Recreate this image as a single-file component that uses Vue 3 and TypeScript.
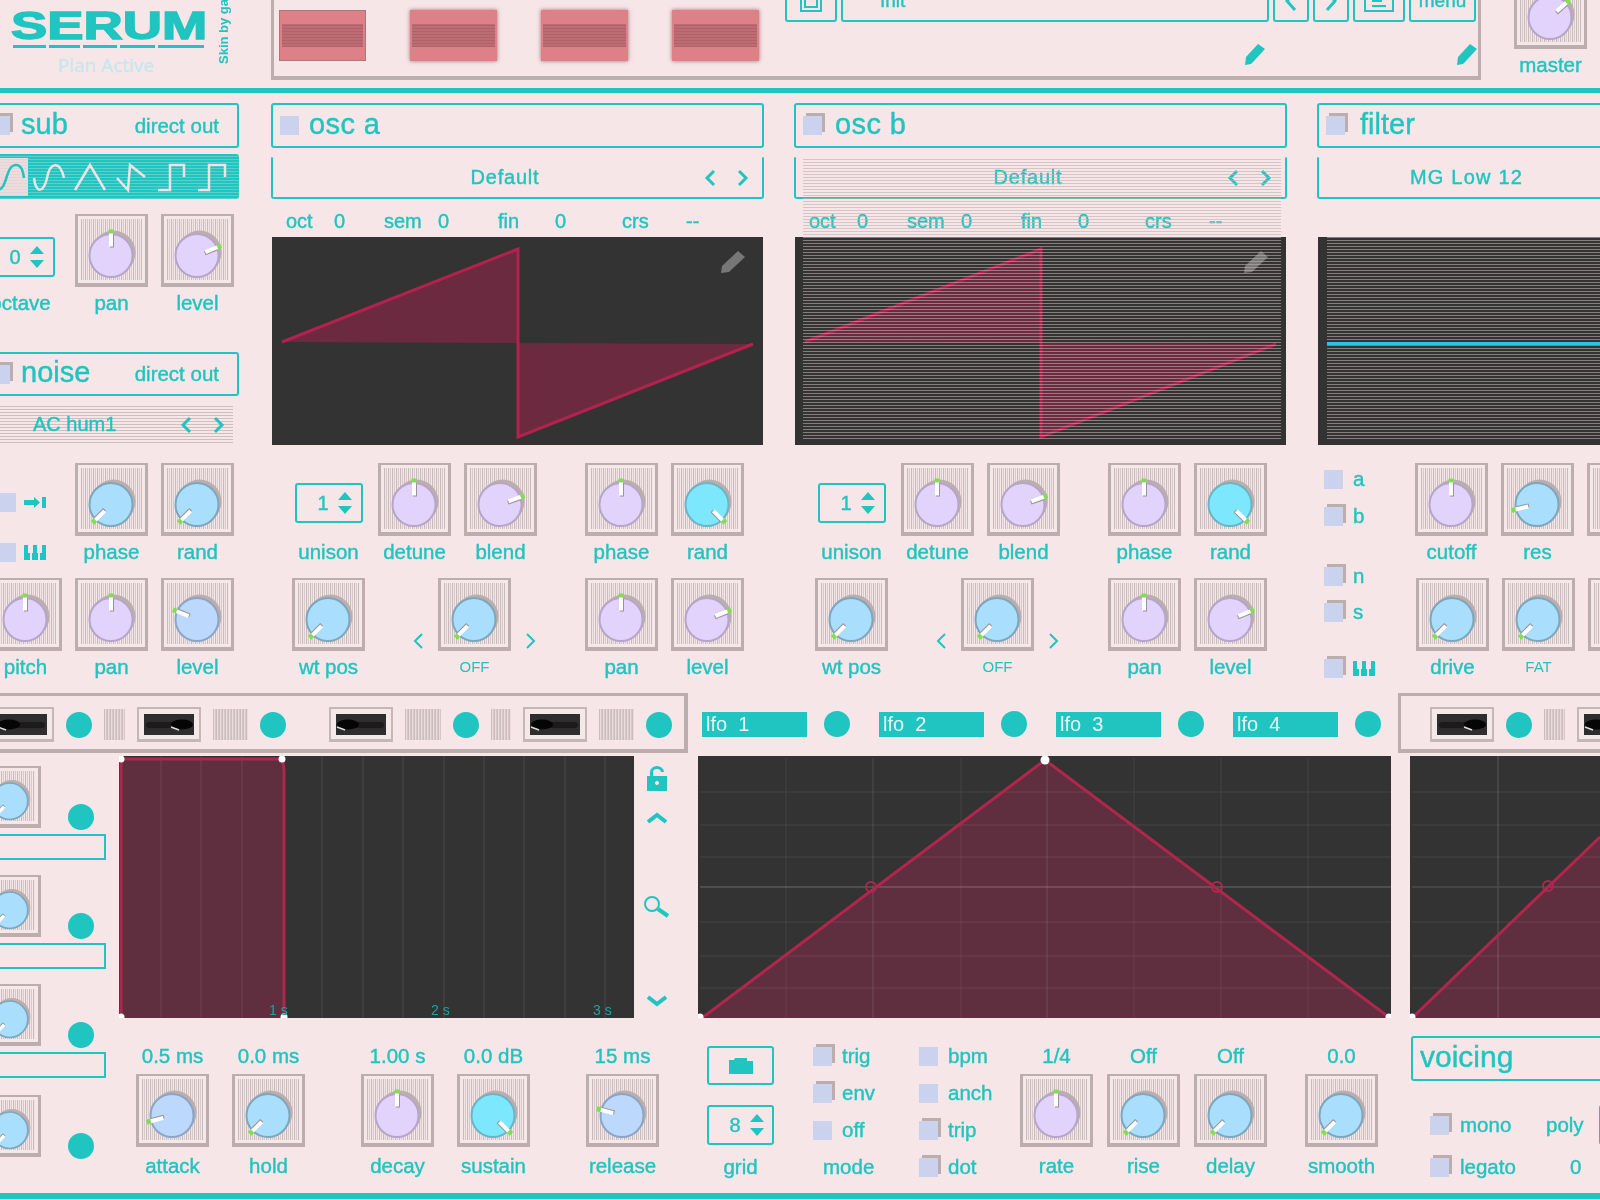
<template>
  <div class="app">
    <header class="top">
      <div class="logo">
        <div class="logo-main">
          <div class="wordmark">SERUM</div>
          <div class="underline">
            <i v-for="w in logoBars" :key="w" :style="{ width: w + 'px' }"></i>
          </div>
          <div class="plan">Plan Active</div>
        </div>
        <div class="skin">Skin by gati</div>
      </div>
      <div class="macro-panel">
        <div class="macros">
          <div v-for="(m, i) in 4" :key="m" class="macro" :class="{ flat: i === 0 }"><i></i></div>
        </div>
        <div class="preset">
          <div class="preset-row">
            <button class="pbtn w-save">
              <svg width="24" height="22" viewBox="0 0 24 22"><path d="M2 1h20v20H2zM6 5h12v12H6z" fill="none" stroke="#20c4c0" stroke-width="2" /></svg>
            </button>
            <button class="pbtn w-init">Init</button>
            <button class="pbtn w-arrow">
              <svg width="14" height="22" viewBox="0 0 14 22"><path d="M11 2 3 11l8 9" fill="none" stroke="#20c4c0" stroke-width="3" /></svg>
            </button>
            <button class="pbtn w-arrow">
              <svg width="14" height="22" viewBox="0 0 14 22"><path d="m3 2 8 9-8 9" fill="none" stroke="#20c4c0" stroke-width="3" /></svg>
            </button>
            <button class="pbtn w-save">
              <svg width="30" height="22" viewBox="0 0 30 22"><path d="M1 1h28v20H1z" fill="none" stroke="#20c4c0" stroke-width="2" /><path d="M8 6h14M8 11h10M8 16h14" stroke="#20c4c0" stroke-width="2" /></svg>
            </button>
            <button class="pbtn w-menu">menu</button>
          </div>
          <div class="pencils">
            <svg v-for="p in 2" :key="p" width="22" height="23" viewBox="0 0 22 23"><path d="M1 22 2 14 14 1l7 5L9 19l-2 2z" fill="#20c4c0" /></svg>
          </div>
        </div>
      </div>
      <Knob class="master" label="master" tone="violet" :angle="48" />
    </header>
    <div class="rule"></div>

    <section class="synth">
      <div class="col-left">
        <div class="box head left-head">
          <i class="chk raised"></i>
          <span class="title">sub</span>
          <span class="direct">direct out</span>
        </div>
        <div class="waves">
          <i class="wave-on"></i>
          <svg class="wave-svg" width="239" height="45" viewBox="0 0 239 45">
            <path d="M-3 36C8 36 5 11 16 11c6 0 7 7 8 13" fill="none" stroke="#20c4c0" stroke-width="2.500" />
            <g fill="none" stroke="#f0e3e3" stroke-width="2.500">
              <path d="M34 24c2 17 10 14 13 0 3-16 13-18 17 0" />
              <path d="m75 36 15-25 15 25" />
              <path d="m117 24 11 12 2-25 15 12" />
              <path d="M158 36h12V11h14v12" />
              <path d="M198 36h11V11h16v12" />
            </g>
          </svg>
        </div>
        <div class="row sub-row">
          <Stepper class="low" label="octave" value="0" />
          <Knob v-bind="subKnobs[0]" />
          <Knob v-bind="subKnobs[1]" />
        </div>
        <div class="box head left-head noise-head">
          <i class="chk raised"></i>
          <span class="title">noise</span>
          <span class="direct">direct out</span>
        </div>
        <div class="noise-band">
          <span>AC hum1</span>
          <svg class="chev" width="12" height="18" viewBox="0 0 12 18"><path d="M10 2 3 9l7 7" /></svg>
          <svg class="chev" width="12" height="18" viewBox="0 0 12 18"><path d="m2 2 7 7-7 7" /></svg>
        </div>
        <div class="row left-r1">
          <div class="lead">
            <div class="lead-item">
              <i class="chk"></i>
              <svg width="22" height="11" viewBox="0 0 22 11"><path d="M0 3h10V0l6 5.500-6 5.500V8H0zM18 0h4v11h-4z" fill="#20c4c0" /></svg>
            </div>
            <div class="lead-item">
              <i class="chk"></i>
              <svg width="22" height="15" viewBox="0 0 22 15"><path d="M0 0h4v8h2v7H0zM8 8h1V0h4v8h1v7H8zM16 8h2V0h4v15h-6z" fill="#20c4c0" /></svg>
            </div>
          </div>
          <Knob v-for="k in noiseKnobs" :key="k.label" v-bind="k" />
        </div>
        <div class="row left-r2">
          <Knob v-for="k in mixKnobs" :key="k.label" v-bind="k" />
        </div>
      </div>

      <div v-for="(o, i) in oscs" :key="o.name" class="osc" :class="{ 'osc-b': i === 1 }">
        <div class="box head">
          <i class="chk" :class="{ raised: i === 1 }"></i>
          <span class="title">{{ o.name }}</span>
        </div>
        <div class="box open select">
          <span class="select-name">Default</span>
          <svg class="chev" width="12" height="18" viewBox="0 0 12 18"><path d="M10 2 3 9l7 7" /></svg>
          <svg class="chev" width="12" height="18" viewBox="0 0 12 18"><path d="m2 2 7 7-7 7" /></svg>
        </div>
        <div class="params">
          <span v-for="(p, j) in params" :key="j">{{ p }}</span>
        </div>
        <div class="graph">
          <svg width="491" height="208" viewBox="0 0 491 208">
            <path d="M10 105 246 12v94zM246 106v94l235-93z" fill="#6b2a3f" />
            <path d="M10 105 246 12v188l235-93" fill="none" stroke="#b3224f" stroke-width="3" />
          </svg>
          <svg class="graph-pencil" width="26" height="24" viewBox="0 0 26 24"><path d="M1 23 2 16 18 1l7 6L9 22z" fill="#777" /></svg>
        </div>
        <div class="osc-knobs">
          <Stepper label="unison" value="1" />
          <Knob v-bind="o.row1[0]" />
          <Knob v-bind="o.row1[1]" />
          <Knob class="far" v-bind="o.row1[2]" />
          <Knob v-bind="o.row1[3]" />
        </div>
        <div class="osc-knobs second">
          <Knob v-bind="o.row2[0]" />
          <div class="chev-slot">
            <svg class="chev thin" width="12" height="18" viewBox="0 0 12 18"><path d="M10 2 3 9l7 7" /></svg>
          </div>
          <Knob class="small-label" v-bind="o.row2[1]" />
          <div class="chev-slot right">
            <svg class="chev thin" width="12" height="18" viewBox="0 0 12 18"><path d="m2 2 7 7-7 7" /></svg>
          </div>
          <Knob v-bind="o.row2[2]" />
          <Knob v-bind="o.row2[3]" />
        </div>
        <div v-if="i === 1" class="lines osc-lines"></div>
      </div>

      <div class="filter">
        <div class="box head">
          <i class="chk raised"></i>
          <span class="title">filter</span>
        </div>
        <div class="box open select filter-select">MG Low 12</div>
        <div class="graph filter-graph">
          <i class="lines filter-lines"></i>
          <i class="filter-line"></i>
        </div>
        <div class="filter-rows">
          <div class="route">
            <div class="route-group">
              <div class="opt"><i class="chk"></i><span>a</span></div>
              <div class="opt"><i class="chk raised"></i><span>b</span></div>
            </div>
            <div class="route-group tight">
              <div class="opt"><i class="chk raised"></i><span>n</span></div>
              <div class="opt"><i class="chk raised"></i><span>s</span></div>
            </div>
            <div class="route-group">
              <div class="opt">
                <i class="chk raised"></i>
                <svg width="22" height="15" viewBox="0 0 22 15"><path d="M0 0h4v8h2v7H0zM8 8h1V0h4v8h1v7H8zM16 8h2V0h4v15h-6z" fill="#20c4c0" /></svg>
              </div>
            </div>
          </div>
          <div class="filter-knobs">
            <div class="row">
              <Knob v-for="k in filterRow1" :key="k.label" v-bind="k" />
            </div>
            <div class="row filter-second">
              <Knob v-for="(k, i) in filterRow2" :key="i" :class="{ 'small-label': k.label === 'FAT' }" v-bind="k" />
            </div>
          </div>
        </div>
      </div>
    </section>

    <section class="strip-row">
      <div class="strip">
        <template v-for="(it, i) in stripLeft" :key="i">
          <div v-if="it.kind === 'slot'" class="slot" :class="{ 'after-gap': it.brk }">
            <svg width="50" height="21" viewBox="0 0 50 21">
              <rect x="2" y="8" width="46" height="6" rx="3" fill="#1b1b1b" />
              <ellipse :cx="it.blob === 'r' ? 38 : 12" cy="10.500" rx="11" ry="5" fill="#050505" />
              <path :d="it.blob === 'r' ? 'M27 13l8 3' : 'M1 13l8 3'" stroke="#ddd" stroke-width="1.500" />
            </svg>
          </div>
          <i v-else-if="it.kind === 'dot'" class="dot"></i>
          <i v-else class="hatch" :style="{ width: it.w + 'px' }"></i>
        </template>
      </div>
      <div class="lfo-tabs">
        <div v-for="n in 4" :key="n" class="lfo-tab">
          <span class="tab">lfo&nbsp; {{ n }}</span>
          <i class="dot"></i>
        </div>
      </div>
      <div class="strip strip-right">
        <div class="slot">
          <svg width="50" height="21" viewBox="0 0 50 21">
            <rect x="2" y="8" width="46" height="6" rx="3" fill="#1b1b1b" />
            <ellipse cx="38" cy="10.500" rx="11" ry="5" fill="#050505" />
            <path d="M27 13l8 3" stroke="#ddd" stroke-width="1.500" />
          </svg>
        </div>
        <i class="dot"></i>
        <i class="hatch narrow"></i>
        <div class="slot">
          <svg width="50" height="21" viewBox="0 0 50 21">
            <rect x="2" y="8" width="46" height="6" rx="3" fill="#1b1b1b" />
            <ellipse cx="12" cy="10.500" rx="11" ry="5" fill="#050505" />
            <path d="M1 13l8 3" stroke="#ddd" stroke-width="1.500" />
          </svg>
        </div>
      </div>
    </section>

    <section class="lower">
      <div class="mods">
        <div v-for="n in 4" :key="n" class="mod">
          <div class="mod-top">
            <Knob :small="true" tone="sky" :angle="-135" />
            <i class="dot"></i>
          </div>
          <div v-if="n < 4" class="mod-box"></div>
        </div>
      </div>

      <div class="lower-main">
        <div class="graphs">
          <svg class="env" width="515" height="262" viewBox="0 0 515 262">
            <rect width="515" height="262" fill="#333" />
            <path d="M2 3h160c2 2 3 6 3 12v247H2z" fill="#5f2f3f" />
            <path v-for="x in envLines" :key="x" :d="`M${x} 0v262`" stroke="#fff" stroke-opacity=".1" stroke-width="1" />
            <path d="M2 262V3h160c2 2 3 6 3 12v247" fill="none" stroke="#ab2851" stroke-width="3" />
            <circle cx="2" cy="3" r="3.500" fill="#fff" />
            <circle cx="163" cy="3" r="3.500" fill="#fff" />
            <circle cx="2" cy="261" r="3.500" fill="#fff" />
            <circle cx="165" cy="261" r="3.500" fill="#fff" />
            <text x="150" y="259" class="sec">1 s</text>
            <text x="312" y="259" class="sec">2 s</text>
            <text x="474" y="259" class="sec">3 s</text>
          </svg>
          <div class="tools">
            <svg width="20" height="25" viewBox="0 0 20 25"><path d="M0 10h20v15H0zM10 15a2 2 0 1 0 .01 0z" fill="#20c4c0" fill-rule="evenodd" /><path d="M4.500 10V6a5.500 4.500 0 0 1 11 0" fill="none" stroke="#20c4c0" stroke-width="3" /></svg>
            <svg class="t-up" width="20" height="12" viewBox="0 0 20 12"><path d="M1 10 10 3l9 7" fill="none" stroke="#20c4c0" stroke-width="4" /></svg>
            <svg class="t-mag" width="26" height="22" viewBox="0 0 26 22"><circle cx="8" cy="8" r="7" fill="none" stroke="#20c4c0" stroke-width="2" /><path d="m14 13 10 7" stroke="#20c4c0" stroke-width="4" /></svg>
            <svg class="t-down" width="20" height="12" viewBox="0 0 20 12"><path d="m1 2 9 7 9-7" fill="none" stroke="#20c4c0" stroke-width="4" /></svg>
          </div>
          <svg class="lfo" width="693" height="262" viewBox="0 0 693 262">
            <rect width="693" height="262" fill="#333" />
            <path d="M4 262 347 4l345 258z" fill="#5f2f3f" />
            <path v-for="x in lfoV" :key="'v' + x" :d="`M${x} 2v260`" stroke="#fff" stroke-opacity=".07" />
            <path v-for="y in lfoH" :key="'h' + y" :d="`M2 ${y}h691`" stroke="#fff" stroke-opacity=".06" stroke-width="1.500" />
            <path d="M2 131h691" stroke="#fff" stroke-opacity=".18" stroke-width="1.500" />
            <path d="M175 2v260M349 2v260" stroke="#fff" stroke-opacity=".13" />
            <path d="M4 262 347 4l345 258" fill="none" stroke="#b0264f" stroke-width="3" />
            <circle cx="173" cy="131" r="5" fill="none" stroke="#b0264f" stroke-width="2" />
            <circle cx="519" cy="131" r="5" fill="none" stroke="#b0264f" stroke-width="2" />
            <circle cx="347" cy="4" r="4.500" fill="#fff" />
            <circle cx="2" cy="261" r="3.500" fill="#fff" />
            <circle cx="691" cy="261" r="3.500" fill="#fff" />
          </svg>
          <svg class="lfo-right" width="190" height="262" viewBox="0 0 190 262">
            <rect width="190" height="262" fill="#333" />
            <path d="M2 262 190 81v181z" fill="#5f2f3f" />
            <path v-for="y in lfoH" :key="y" :d="`M2 ${y}h188`" stroke="#fff" stroke-opacity=".06" stroke-width="1.500" />
            <path d="M2 131h188M88 0v262" stroke="#fff" stroke-opacity=".12" stroke-width="1.500" />
            <path d="M2 262 190 81" fill="none" stroke="#b0264f" stroke-width="3" />
            <circle cx="138" cy="130" r="5" fill="none" stroke="#b0264f" stroke-width="2" />
            <circle cx="2" cy="261" r="3.500" fill="#fff" />
          </svg>
        </div>

        <div class="controls">
          <div class="knob-group first">
            <div class="pair"><Knob v-for="k in envKnobs.slice(0, 2)" :key="k.label" v-bind="k" /></div>
            <div class="pair"><Knob v-for="k in envKnobs.slice(2, 4)" :key="k.label" v-bind="k" /></div>
            <Knob v-bind="envKnobs[4]" />
          </div>
          <div class="grid-col">
            <button class="box folder">
              <svg width="26" height="17" viewBox="0 0 26 17"><path d="M1 3h5l1-2h12v3h6v13H1z" fill="#20c4c0" /></svg>
            </button>
            <Stepper label="grid" value="8" class="grid-step" />
          </div>
          <div class="opt-col">
            <div class="opt"><i class="chk raised"></i><span>trig</span></div>
            <div class="opt"><i class="chk raised"></i><span>env</span></div>
            <div class="opt"><i class="chk"></i><span>off</span></div>
            <div class="mode">mode</div>
          </div>
          <div class="opt-col col-bpm">
            <div class="opt"><i class="chk"></i><span>bpm</span></div>
            <div class="opt"><i class="chk"></i><span>anch</span></div>
            <div class="opt"><i class="chk raised"></i><span>trip</span></div>
            <div class="opt"><i class="chk raised"></i><span>dot</span></div>
          </div>
          <div class="pair lfo-knobs">
            <Knob v-for="k in lfoKnobs.slice(0, 3)" :key="k.label" v-bind="k" />
          </div>
          <Knob class="smooth" v-bind="lfoKnobs[3]" />
          <div class="voicing">
            <div class="box head voice-head"><span class="title">voicing</span></div>
            <div class="voice-row">
              <i class="chk raised"></i>
              <span class="voice-name">mono</span>
              <span class="poly">poly</span>
              <div class="box poly-box"></div>
            </div>
            <div class="voice-row">
              <i class="chk raised"></i>
              <span class="voice-name">legato</span>
              <span class="zero">0</span>
            </div>
          </div>
        </div>
      </div>
    </section>
    <div class="rule bottom-rule"></div>
  </div>
</template>

<script setup lang="ts">
import { h, type FunctionalComponent } from "vue";

type Tone = "violet" | "sky" | "blue" | "cyan";

interface KnobProps {
  label?: string;
  value?: string;
  tone?: Tone;
  angle?: number;
  small?: boolean;
}

const toneColors: Record<Tone, [string, string]> = {
  violet: ["#e2d3fc", "#b7a5c9"],
  sky: ["#a9defd", "#7ea6bd"],
  blue: ["#bcd9fd", "#8aa5c5"],
  cyan: ["#7de8fd", "#6db3c6"],
};

const Knob: FunctionalComponent<KnobProps> = (p) => {
  const [fill, edge] = toneColors[p.tone ?? "sky"];
  const cx = 36;
  const cy = 41.5;
  const svg = h("svg", { class: "knob", viewBox: "0 0 73 73" }, [
    h("circle", { cx: cx + 2.5, cy: cy - 3, r: 22, fill: "#bdaeae" }),
    h("circle", { cx, cy, r: 21.5, fill, stroke: edge, "stroke-width": 2 }),
    h("g", { transform: `rotate(${p.angle ?? 0} ${cx} ${cy})` }, [
      h("rect", { x: cx - 2.5, y: cy - 26, width: 5, height: 4, fill: "#7ee04c" }),
      h("rect", { x: cx - 1, y: cy - 21, width: 4, height: 13, fill: "#9a9296" }),
      h("rect", { x: cx - 2, y: cy - 22, width: 4, height: 13, fill: "#fff" }),
    ]),
  ]);
  return h("div", { class: "cell" }, [
    p.value ? h("span", { class: "val" }, p.value) : null,
    h("div", { class: ["tile", p.small ? "sm" : ""] }, svg),
    p.label !== undefined ? h("span", { class: "lbl" }, p.label) : null,
  ]);
};
Knob.props = ["label", "value", "tone", "angle", "small"];

const Stepper: FunctionalComponent<{ label: string; value: string }> = (p) =>
  h("div", { class: "cell" }, [
    h("div", { class: "step-area" }, [
      h("div", { class: "step" }, [
        h("span", { class: "step-num" }, p.value),
        h("svg", { width: 14, height: 26, viewBox: "0 0 14 26" }, [
          h("path", { d: "M7 2l7 8H0zM0 16h14l-7 8z", fill: "#20c4c0" }),
        ]),
      ]),
    ]),
    h("span", { class: "lbl" }, p.label),
  ]);
Stepper.props = ["label", "value"];

const logoBars = [33, 31, 34, 35, 46];

const params = ["oct", "0", "sem", "0", "fin", "0", "crs", "--"];

const subKnobs: KnobProps[] = [
  { label: "pan", tone: "violet", angle: 0 },
  { label: "level", tone: "violet", angle: 68 },
];

const noiseKnobs: KnobProps[] = [
  { label: "phase", tone: "sky", angle: -135 },
  { label: "rand", tone: "sky", angle: -135 },
];

const mixKnobs: KnobProps[] = [
  { label: "pitch", tone: "violet", angle: 0 },
  { label: "pan", tone: "violet", angle: 0 },
  { label: "level", tone: "blue", angle: -68 },
];

const oscRow1: KnobProps[] = [
  { label: "detune", tone: "violet", angle: 0 },
  { label: "blend", tone: "violet", angle: 70 },
  { label: "phase", tone: "violet", angle: 0 },
  { label: "rand", tone: "cyan", angle: 135 },
];

const oscRow2: KnobProps[] = [
  { label: "wt pos", tone: "sky", angle: -135 },
  { label: "OFF", tone: "sky", angle: -135 },
  { label: "pan", tone: "violet", angle: 0 },
  { label: "level", tone: "violet", angle: 68 },
];

const oscs = [
  { name: "osc a", row1: oscRow1, row2: oscRow2 },
  { name: "osc b", row1: oscRow1, row2: oscRow2 },
];

const filterRow1: KnobProps[] = [
  { label: "cutoff", tone: "violet", angle: 0 },
  { label: "res", tone: "sky", angle: -103 },
  { label: "", tone: "sky", angle: -135 },
];

const filterRow2: KnobProps[] = [
  { label: "drive", tone: "sky", angle: -135 },
  { label: "FAT", tone: "sky", angle: -135 },
  { label: "", tone: "sky", angle: -135 },
];

const envKnobs: KnobProps[] = [
  { value: "0.5 ms", label: "attack", tone: "blue", angle: -105 },
  { value: "0.0 ms", label: "hold", tone: "sky", angle: -135 },
  { value: "1.00 s", label: "decay", tone: "violet", angle: 0 },
  { value: "0.0 dB", label: "sustain", tone: "cyan", angle: 135 },
  { value: "15 ms", label: "release", tone: "blue", angle: -75 },
];

const lfoKnobs: KnobProps[] = [
  { value: "1/4", label: "rate", tone: "violet", angle: 0 },
  { value: "Off", label: "rise", tone: "sky", angle: -135 },
  { value: "Off", label: "delay", tone: "sky", angle: -135 },
  { value: "0.0", label: "smooth", tone: "sky", angle: -135 },
];

type StripItem =
  | { kind: "slot"; blob: "l" | "r"; brk?: boolean }
  | { kind: "dot" }
  | { kind: "hatch"; w: number };

const stripLeft: StripItem[] = [
  { kind: "slot", blob: "l" },
  { kind: "dot" },
  { kind: "hatch", w: 21 },
  { kind: "slot", blob: "r" },
  { kind: "hatch", w: 35 },
  { kind: "dot" },
  { kind: "slot", blob: "l", brk: true },
  { kind: "hatch", w: 36 },
  { kind: "dot" },
  { kind: "hatch", w: 20 },
  { kind: "slot", blob: "l" },
  { kind: "hatch", w: 35 },
  { kind: "dot" },
];

const envLines = [42, 82, 123, 203, 244, 284, 325, 365, 405, 446, 486];
const lfoV = [88, 263, 436, 523, 610];
const lfoH = [36, 69, 101, 166, 200, 232];
</script>

<style>
.cell {
  display: flex;
  flex-direction: column;
  align-items: center;
  width: 73px;
  flex: none;
}
.tile {
  position: relative;
  box-sizing: border-box;
  width: 73px;
  height: 73px;
  flex: none;
  border: 3px solid #bdaeae;
  border-top-width: 2px;
  border-bottom-width: 4px;
  padding: 3px;
  background: repeating-linear-gradient(90deg, #c9bbbb 0 1px, #f1e3e3 1px 2px, #d8caca 2px 3px, #f5e8e8 3px 4px) content-box, #f5e8e8;
}
.tile.sm {
  width: 62px;
  height: 62px;
}
.knob {
  position: absolute;
  left: -3px;
  top: -2px;
  width: 73px;
  height: 73px;
  overflow: visible;
}
.tile.sm .knob {
  width: 62px;
  height: 62px;
}
.lbl,
.val {
  font-size: 20.5px;
  line-height: 24px;
  height: 24px;
  white-space: nowrap;
  color: #20c4c0;
}
.lbl {
  margin-top: 4px;
}
.val {
  margin-bottom: 6px;
}
.step-area {
  height: 73px;
  box-sizing: border-box;
  padding-top: 20px;
}
.cell.low .step-area {
  padding-top: 23px;
}
.step {
  display: flex;
  align-items: center;
  justify-content: center;
  gap: 9px;
  box-sizing: border-box;
  width: 68px;
  height: 40px;
  padding-left: 12px;
  border: 2px solid #20c4c0;
  border-radius: 3px;
}
.step-num {
  width: 12px;
  text-align: center;
  font-size: 20px;
  color: #20c4c0;
}
.small-label .lbl {
  font-size: 15px;
  -webkit-text-stroke-width: 0;
}
</style>

<style scoped>
.app {
  position: relative;
  width: 1600px;
  height: 1200px;
  overflow: hidden;
  background: #f6e6e7;
  color: #20c4c0;
  font-family: "Liberation Sans", Arial, sans-serif;
  -webkit-text-stroke-width: 0.4px;
  filter: blur(0.3px);
}

i {
  display: block;
  font-style: normal;
}

button {
  font-family: inherit;
  background: none;
  color: inherit;
  padding: 0;
}

.top {
  display: flex;
  height: 88px;
}

.logo {
  display: flex;
  width: 271px;
  flex: none;
}

.logo-main {
  width: 218px;
  padding-top: 7px;
  padding-left: 11px;
  box-sizing: border-box;
}

.wordmark {
  font-size: 38px;
  line-height: 38px;
  font-weight: 700;
  transform: scaleX(1.43);
  transform-origin: left;
  -webkit-text-stroke-width: 1.4px;
}

.underline {
  display: flex;
  gap: 3px;
  margin-left: 2px;
}

.underline i {
  height: 3px;
  background: #20c4c0;
}

.plan {
  margin-top: 6px;
  padding-left: 47px;
  font-family: "Open Sans", sans-serif;
  font-size: 19px;
  line-height: 22px;
  color: #c8e6ee;
}

.skin {
  align-self: flex-start;
  height: 64px;
  writing-mode: vertical-rl;
  transform: rotate(180deg);
  white-space: nowrap;
  font-size: 13px;
  font-weight: 700;
  line-height: 12px;
  -webkit-text-stroke-width: 0;
}

.macro-panel {
  display: flex;
  box-sizing: border-box;
  width: 1210px;
  height: 80px;
  flex: none;
  border: 3px solid #bdaeae;
  border-top: 0;
  border-bottom-width: 4px;
  padding-left: 5px;
}

.macros {
  display: flex;
  gap: 44px;
  width: 506px;
  flex: none;
  padding-top: 10px;
}

.macro {
  display: flex;
  align-items: center;
  width: 87px;
  height: 51px;
  box-sizing: border-box;
  background: #de8088;
  box-shadow: 0 0 4px #a06a6e;
}

.macro.flat {
  border: 1px solid #a77;
  box-shadow: none;
}

.macro i {
  flex: 1;
  height: 23px;
  margin: 0 2px;
  background: repeating-linear-gradient(0deg, #ae6269 0 1px, #be6c74 1px 3px);
}

.preset {
  display: flex;
  flex-direction: column;
  width: 694px;
  flex: none;
}

.preset-row {
  display: flex;
  gap: 4px;
  height: 22px;
  align-items: flex-end;
}

.pbtn {
  display: flex;
  align-items: center;
  justify-content: center;
  box-sizing: border-box;
  height: 42px;
  flex: none;
  border: 2px solid #20c4c0;
  border-radius: 3px;
  font-size: 19px;
}

.w-save {
  width: 52px;
}

.w-init {
  width: 428px;
  justify-content: flex-start;
  padding-left: 37px;
}

.w-arrow {
  width: 36px;
}

.w-menu {
  width: 67px;
}

.pencils {
  display: flex;
  gap: 190px;
  margin-top: 21px;
  padding-left: 459px;
}

.master {
  margin-top: -24px;
  margin-left: 33px;
}

.rule {
  height: 5px;
  background: #20c4c0;
}

.synth {
  display: flex;
  height: 600px;
}

.box {
  box-sizing: border-box;
  border: 2px solid #20c4c0;
  border-radius: 3px;
}

.head {
  display: flex;
  align-items: center;
  height: 45px;
  margin-top: 10px;
}

.title {
  font-size: 29px;
  line-height: 40px;
  margin-top: -4px;
}

.chk {
  display: block;
  position: relative;
  width: 19px;
  height: 19px;
  flex: none;
  background: #cad2ee;
}

.chk.raised {
  box-shadow: 3px -3px 0 #bdaeae;
}

.col-left {
  width: 239px;
  flex: none;
  margin-right: 32px;
}

.left-head {
  width: 259px;
  margin-left: -20px;
  padding-left: 9px;
}

.left-head .title {
  margin-left: 11px;
}

.direct {
  margin-left: auto;
  padding-right: 18px;
  font-size: 20.5px;
}

.waves {
  position: relative;
  height: 45px;
  margin-top: 6px;
  background: repeating-linear-gradient(0deg, #5dd0cb 0 1px, #20c4c0 1px 3px);
  border-radius: 0 3px 3px 0;
}

.wave-on {
  position: absolute;
  left: 0;
  top: 4px;
  width: 28px;
  height: 38px;
  background: repeating-linear-gradient(0deg, #e3d5d5 0 1px, #ecdcdc 1px 3px);
}

.wave-svg {
  position: absolute;
  left: 0;
  top: 0;
}

.row {
  display: flex;
  gap: 13px;
}

.sub-row {
  margin-top: 15px;
  margin-left: -16px;
}

.sub-row > .cell:first-child {
  margin-right: 5px;
}

.noise-head {
  margin-top: 37px;
  height: 44px;
}

.noise-band {
  display: flex;
  align-items: center;
  gap: 21px;
  box-sizing: border-box;
  width: 233px;
  height: 37px;
  margin-top: 10px;
  padding-left: 33px;
  font-size: 20px;
  background: repeating-linear-gradient(0deg, #cfc0c0 0 1px, transparent 1px 3px);
}

.noise-band span {
  width: 126px;
}

.chev {
  flex: none;
}

.chev path {
  fill: none;
  stroke: #20c4c0;
  stroke-width: 3;
}

.chev.thin path {
  stroke-width: 2;
}

.left-r1 {
  margin-top: 20px;
}

.lead {
  width: 62px;
  height: 101px;
  flex: none;
  padding-top: 29px;
  box-sizing: border-box;
}

.lead-item {
  display: flex;
  align-items: center;
  gap: 8px;
  margin-left: -3px;
  height: 20px;
  margin-bottom: 30px;
}

.left-r2 {
  margin-top: 14px;
  margin-left: -11px;
}

.osc {
  position: relative;
  width: 493px;
  flex: none;
  margin-right: 30px;
}

.osc .head {
  padding-left: 7px;
}

.osc .title {
  margin-left: 10px;
  letter-spacing: 0.4px;
}

.osc-b .head {
  padding-left: 7px;
}

.osc-b .title {
  margin-left: 13px;
  letter-spacing: 0.4px;
}

.open {
  border-top-color: transparent;
}

.select {
  display: flex;
  align-items: center;
  height: 43px;
  margin-top: 8px;
  padding-right: 13px;
  font-size: 20px;
  letter-spacing: 0.8px;
}

.select-name {
  flex: 1;
  padding-left: 33px;
  text-align: center;
}

.select .chev + .chev {
  margin-left: 21px;
}

.params {
  display: grid;
  grid-template-columns: 48px 50px 54px 60px 57px 67px 64px 1fr;
  height: 24px;
  margin-top: 10px;
  padding-left: 15px;
  font-size: 20px;
  line-height: 24px;
}

.graph {
  position: relative;
  height: 208px;
  margin: 4px 1px 0;
  background: #333;
}

.graph svg {
  display: block;
}

.graph .graph-pencil {
  position: absolute;
  right: 17px;
  top: 13px;
}

.osc-knobs {
  display: flex;
  gap: 13px;
  margin-top: 18px;
  padding-left: 21px;
}

.osc-knobs.second {
  gap: 0;
  margin-top: 14px;
}

.osc-knobs.second > .cell:last-child {
  margin-left: 13px;
}

.far {
  margin-left: 35px;
}

.chev-slot {
  width: 73px;
  flex: none;
  padding: 54px 0 0 47px;
  box-sizing: border-box;
}

.chev-slot.right {
  width: 74px;
  padding-left: 14px;
}

.lines {
  position: absolute;
  pointer-events: none;
  background: repeating-linear-gradient(0deg, rgba(190, 175, 175, 0.6) 0 1px, transparent 1px 3px);
}

.osc-lines {
  left: 9px;
  top: 65px;
  width: 478px;
  height: 281px;
}

.filter {
  width: 400px;
  flex: none;
}

.filter .head {
  padding-left: 7px;
}

.filter .title {
  margin-left: 15px;
}

.filter-select {
  padding-left: 91px;
  letter-spacing: 1.2px;
}

.filter-graph {
  margin-top: 38px;
}

.filter-lines {
  left: 9px;
  right: 0;
  top: 0;
  bottom: 6px;
}

.filter-line {
  position: absolute;
  left: 9px;
  right: 0;
  top: 105px;
  height: 3px;
  background: #28c4e0;
}

.filter-rows {
  display: flex;
  margin-top: 18px;
}

.route {
  width: 98px;
  flex: none;
  padding: 4px 0 0 7px;
  box-sizing: border-box;
}

.route-group {
  display: flex;
  flex-direction: column;
  gap: 13px;
  margin-bottom: 36px;
}

.route-group.tight {
  gap: 12px;
  margin-bottom: 32px;
}

.opt {
  display: flex;
  align-items: center;
  gap: 10px;
  height: 24px;
  font-size: 20.5px;
  line-height: 24px;
}

.filter-second {
  margin-top: 14px;
  margin-left: 1px;
}

.strip-row {
  display: flex;
  align-items: center;
  height: 60px;
}

.strip {
  display: flex;
  align-items: center;
  gap: 12px;
  box-sizing: border-box;
  width: 708px;
  height: 60px;
  flex: none;
  margin-left: -20px;
  padding: 4px 0 0 7px;
  border: 3px solid #bdaeae;
  border-width: 3px 4px 4px 3px;
}

.slot {
  display: flex;
  align-items: center;
  justify-content: center;
  box-sizing: border-box;
  width: 64px;
  height: 35px;
  flex: none;
  border: 2px solid #c5b7b7;
  border-bottom-width: 3px;
  background: #f5e8e8;
}

.slot svg {
  display: block;
  background: #2e2e2e;
}

.slot.after-gap {
  margin-left: 31px;
}

.dot {
  width: 26px;
  height: 26px;
  flex: none;
  border-radius: 50%;
  background: #20c4c0;
}

.hatch {
  height: 31px;
  flex: none;
  background: repeating-linear-gradient(90deg, #cbbdbd 0 1px, #ebdcdc 1px 2px, #d6c8c8 2px 3px);
}

.hatch.narrow {
  width: 21px;
}

.lfo-tabs {
  display: flex;
  gap: 29px;
  margin: 2px 0 0 14px;
  width: 680px;
  flex: none;
}

.lfo-tab {
  display: flex;
  align-items: center;
  gap: 17px;
}

.tab {
  box-sizing: border-box;
  width: 105px;
  height: 25px;
  padding-left: 4px;
  background: #20c4c0;
  color: #e6f5f3;
  font-size: 20px;
  line-height: 25px;
  -webkit-text-stroke-width: 0;
}

.strip-right {
  width: 300px;
  margin-left: 16px;
  padding-left: 29px;
  border-right: 0;
}

.lower {
  display: flex;
  height: 440px;
}

.mods {
  width: 127px;
  flex: none;
  margin-left: -21px;
  padding-top: 13px;
}

.mod {
  margin-bottom: 15px;
}

.mod:last-child {
  margin-top: 17px;
}

.mod-top {
  display: flex;
  align-items: flex-end;
  gap: 27px;
}

.mod-top .dot {
  margin-bottom: -2px;
}

.mods :deep(.cell) {
  width: 62px;
}

.mod-box {
  box-sizing: border-box;
  height: 26px;
  margin-top: 6px;
  border: 2px solid #20c4c0;
}

.lower-main {
  margin-left: 13px;
  width: 1500px;
  flex: none;
}

.graphs {
  display: flex;
  height: 262px;
  margin-top: 3px;
}

.graphs > svg {
  display: block;
  flex: none;
}

.sec {
  font-size: 14px;
  fill: #17a5a3;
  font-family: "Liberation Sans", sans-serif;
  -webkit-text-stroke-width: 0;
}

.tools {
  display: flex;
  flex-direction: column;
  width: 64px;
  flex: none;
  padding: 10px 0 0 13px;
  box-sizing: border-box;
}

.t-up {
  margin-top: 21px;
}

.t-mag {
  margin-top: 72px;
  margin-left: -3px;
}

.t-down {
  margin-top: 77px;
}

.lfo-right {
  margin-left: 19px;
}

.controls {
  display: flex;
  height: 175px;
  padding-top: 26px;
  box-sizing: border-box;
}

.controls :deep(.tile + .lbl) {
  margin-top: 7px;
}

.knob-group {
  display: flex;
  gap: 56px;
}

.knob-group.first {
  margin-left: 17px;
}

.pair {
  display: flex;
  gap: 23px;
}

.grid-col {
  width: 67px;
  flex: none;
  margin-left: 48px;
  padding-top: 2px;
}

.folder {
  display: flex;
  align-items: center;
  justify-content: center;
  width: 67px;
  height: 39px;
}

.grid-step {
  width: 67px;
  margin-top: 20px;
}

.grid-step :deep(.step-area) {
  height: 40px;
  padding: 0;
}

.grid-step :deep(.step) {
  width: 67px;
}

.grid-step :deep(.lbl) {
  margin-top: 10px;
}

.opt-col {
  display: flex;
  flex-direction: column;
  gap: 13px;
  width: 106px;
  flex: none;
  margin-left: 39px;
}

.col-bpm {
  width: 101px;
  margin-left: 0;
}

.mode {
  margin: 0 0 0 10px;
  font-size: 20.5px;
  line-height: 24px;
}

.lfo-knobs {
  gap: 14px;
}

.smooth {
  margin-left: 38px;
}

.voicing {
  width: 300px;
  flex: none;
  margin-top: -26px;
  margin-left: 33px;
}

.voice-head {
  margin-top: 18px;
  padding-left: 7px;
}

.voice-head .title {
  font-size: 30px;
}

.voice-row {
  display: flex;
  align-items: center;
  height: 40px;
  padding-left: 19px;
  font-size: 20.5px;
}

.voice-row:nth-child(2) {
  margin-top: 24px;
}

.voice-row:nth-child(3) {
  margin-top: 2px;
}

.voice-name {
  margin-left: 11px;
  width: 86px;
}

.zero {
  margin-left: 24px;
}

.poly-box {
  width: 40px;
  height: 40px;
  margin-left: 15px;
}

.bottom-rule {
  height: 6px;
}
</style>
